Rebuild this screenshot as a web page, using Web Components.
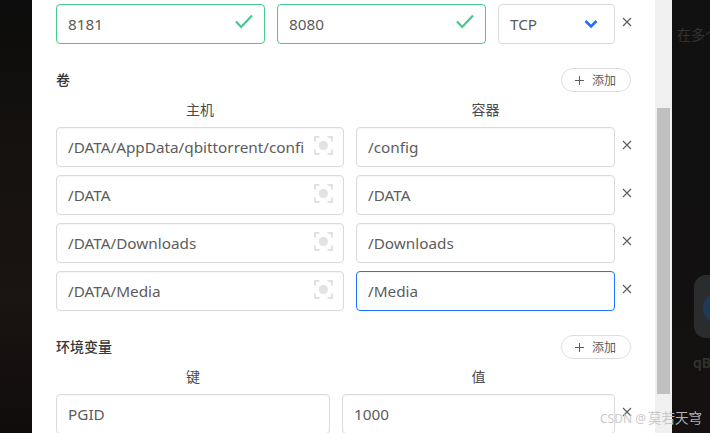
<!DOCTYPE html>
<html>
<head>
<meta charset="utf-8">
<style>
  html, body { margin: 0; height: 100%; overflow: hidden; background: #111; }
  body { font-family: "Noto Sans", "Noto Sans CJK SC", sans-serif; }
</style>
</head>
<body>
<app-shell>
  <port-row>
    <text-field value="8181" state="ok"></text-field>
    <text-field value="8080" state="ok"></text-field>
    <select-field value="TCP"></select-field>
  </port-row>

  <section-head title="卷"></section-head>
  <column-labels cols="288px 259px" left="主机" right="容器"></column-labels>
  <field-row cols="288px 259px">
    <text-field value="/DATA/AppData/qbittorrent/confi" picker></text-field>
    <text-field value="/config"></text-field>
  </field-row>
  <field-row cols="288px 259px">
    <text-field value="/DATA" picker></text-field>
    <text-field value="/DATA"></text-field>
  </field-row>
  <field-row cols="288px 259px">
    <text-field value="/DATA/Downloads" picker></text-field>
    <text-field value="/Downloads"></text-field>
  </field-row>
  <field-row cols="288px 259px">
    <text-field value="/DATA/Media" picker></text-field>
    <text-field value="/Media" state="focus"></text-field>
  </field-row>

  <section-head title="环境变量"></section-head>
  <column-labels cols="274px 273px" left="键" right="值"></column-labels>
  <field-row cols="274px 273px">
    <text-field value="PGID"></text-field>
    <text-field value="1000"></text-field>
  </field-row>
</app-shell>

<script>
// Dark desktop behind the dialog, dialog body and its scrollbar
class AppShell extends HTMLElement {
  constructor() {
    super();
    this.attachShadow({ mode: 'open' });
    this.shadowRoot.innerHTML = `
      <style>
        :host { display: block; position: relative; width: 710px; height: 433px; overflow: hidden;
          background: #111; }
        .left { background: linear-gradient(180deg, #0c0c0c 0, #14110f 130px, #1a1412 300px, #0f0c0c 433px); }
        .right { background: linear-gradient(180deg, #111 0, #121010 250px, #151110 433px); }
        .frame { display: grid; grid-template-columns: 32px 623px 17px 38px; height: 433px; }
        .panel { background: #fff; padding: 4px 24px 0; overflow: hidden; color: #4a4a4a; }
        .track { background: #f0f0f0; padding-top: 108px; }
        .thumb { height: 286px; margin: 0 2px; background: #c0c0c0; }
        .bg-text { position: absolute; color: #333; font-size: 14px; white-space: nowrap; }
        .bg-icon { position: absolute; left: 694px; top: 275px; width: 40px; height: 63px;
          border-radius: 12px; background: #2b2c2e; overflow: hidden; }
        .bg-icon i { position: absolute; left: 9px; top: 18px; width: 30px; height: 30px; border-radius: 50%; background: #1d3a58; }
        .mark { position: absolute; left: 600px; top: 408px; font-size: 13.500px; line-height: 20px;
          color: rgba(196,196,196,.92); white-space: nowrap; }
        .mark span { font-size: 12px; margin-right: 2px; }
      </style>
      <div class="frame">
        <div class="left"></div>
        <div class="panel"><slot></slot></div>
        <div class="track"><div class="thumb"></div></div>
        <div class="right"></div>
      </div>
      <div class="bg-text" style="left:677px;top:24px">在多个</div>
      <div class="bg-icon"><i></i></div>
      <div class="bg-text" style="left:693px;top:353px;font-weight:600">qB</div>
      <div class="mark"><span>CSDN @</span>莫若天穹</div>
    `;
  }
}

// Single input look-alike, with optional check mark or folder picker icon
class TextField extends HTMLElement {
  constructor() {
    super();
    this.attachShadow({ mode: 'open' });
  }
  connectedCallback() {
    const state = this.getAttribute('state') || '';
    const icon = state === 'ok'
      ? `<svg class="check" width="20" height="16" viewBox="0 0 20 16"><path d="M2 8.500 7.200 14 18 2.500" fill="none" stroke="#48c78e" stroke-width="2.200"/></svg>`
      : this.hasAttribute('picker')
        ? `<svg class="pick" width="19" height="19" viewBox="0 0 19 19"><path d="M1 5.500V1H5.500M13.500 1H18V5.500M18 13.500V18H13.500M5.500 18H1V13.500" fill="none" stroke="#e2e2e2" stroke-width="2"/><circle cx="9.500" cy="9.500" r="4.500" fill="#e2e2e2"/></svg>`
        : '';
    this.shadowRoot.innerHTML = `
      <style>
        :host { display: block; }
        .box { position: relative; display: flex; align-items: center; box-sizing: border-box; height: 40px;
          padding: 0 11px; background: #fff; border: 1px solid #dbdbdb; border-radius: 4px;
          box-shadow: inset 0 1px 2px rgba(10,10,10,.04); font-size: 15.300px; color: #5c5c5c; }
        .box.ok { border-color: #48c78e; }
        .box.focus { border-color: #1f74ff; }
        .val { flex: 1; min-width: 0; white-space: nowrap; }
        .check { position: absolute; right: 10px; top: 8px; }
        .pick { position: absolute; right: 10px; top: 8px; }
      </style>
      <div class="box ${state}">
        <span class="val">${this.getAttribute('value')}</span>${icon}
      </div>
    `;
  }
}

class SelectField extends HTMLElement {
  constructor() {
    super();
    this.attachShadow({ mode: 'open' });
  }
  connectedCallback() {
    this.shadowRoot.innerHTML = `
      <style>
        :host { display: block; }
        .box { display: flex; align-items: center; justify-content: space-between; box-sizing: border-box; height: 40px;
          padding: 0 16px 0 11px; border: 1px solid #dbdbdb; border-radius: 4px; font-size: 15.300px; color: #5c5c5c; }
      </style>
      <div class="box">
        <span>${this.getAttribute('value')}</span>
        <svg width="14" height="10" viewBox="0 0 14 10"><path d="M1.500 2 7 7.500 12.500 2" fill="none" stroke="#1f6fff" stroke-width="2.600"/></svg>
      </div>
    `;
  }
}

// Small x button at the end of a row
class CloseIcon extends HTMLElement {
  constructor() {
    super();
    this.attachShadow({ mode: 'open' });
    this.shadowRoot.innerHTML = `
      <style>:host { display: block; width: 10px; height: 10px; line-height: 0; }</style>
      <svg width="10" height="10" viewBox="0 0 10 10"><path d="M1 1 9 9M9 1 1 9" fill="none" stroke="#5a5a5a" stroke-width="1.100"/></svg>
    `;
  }
}

class PortRow extends HTMLElement {
  constructor() {
    super();
    this.attachShadow({ mode: 'open' });
    this.shadowRoot.innerHTML = `
      <style>
        :host { display: grid; grid-template-columns: 209px 209px 117px 10px; column-gap: 12px; align-items: start; }
        close-icon { margin: 13px 0 0 -5px; }
      </style>
      <slot></slot><close-icon></close-icon>
    `;
  }
}

class FieldRow extends HTMLElement {
  constructor() {
    super();
    this.attachShadow({ mode: 'open' });
  }
  connectedCallback() {
    this.shadowRoot.innerHTML = `
      <style>
        :host { display: grid; grid-template-columns: ${this.getAttribute('cols')} 10px; column-gap: 12px; align-items: start; margin-bottom: 8px; }
        close-icon { margin: 13px 0 0 -5px; }
      </style>
      <slot></slot><close-icon></close-icon>
    `;
  }
}

class ColumnLabels extends HTMLElement {
  constructor() {
    super();
    this.attachShadow({ mode: 'open' });
  }
  connectedCallback() {
    this.shadowRoot.innerHTML = `
      <style>
        :host { display: grid; grid-template-columns: ${this.getAttribute('cols')}; column-gap: 12px;
          height: 24px; margin-bottom: 5px; font-size: 14px; line-height: 24px; text-align: center; color: #4a4a4a; }
      </style>
      <div>${this.getAttribute('left')}</div><div>${this.getAttribute('right')}</div>
    `;
  }
}

class AddButton extends HTMLElement {
  constructor() {
    super();
    this.attachShadow({ mode: 'open' });
    this.shadowRoot.innerHTML = `
      <style>
        :host { display: flex; align-items: center; box-sizing: border-box; width: 70px; height: 24px;
          padding-left: 13px; border: 1px solid #dedede; border-radius: 12px; font-size: 12px; font-weight: 400; color: #5c5c5c; }
        svg { margin-right: 8px; }
      </style>
      <svg width="9" height="9" viewBox="0 0 9 9"><path d="M4.500 0V9M0 4.500H9" stroke="#5c5c5c" stroke-width="1"/></svg>
      <span>添加</span>
    `;
  }
}

class SectionHead extends HTMLElement {
  constructor() {
    super();
    this.attachShadow({ mode: 'open' });
  }
  connectedCallback() {
    this.shadowRoot.innerHTML = `
      <style>
        :host { display: flex; justify-content: space-between; align-items: center; height: 24px;
          margin-top: 24px; margin-bottom: 6px; font-size: 14px; font-weight: 500; color: #363636; }
        .title { padding-bottom: 2px; }
      </style>
      <span class="title">${this.getAttribute('title')}</span><add-button></add-button>
    `;
  }
}

customElements.define('app-shell', AppShell);
customElements.define('text-field', TextField);
customElements.define('select-field', SelectField);
customElements.define('close-icon', CloseIcon);
customElements.define('port-row', PortRow);
customElements.define('field-row', FieldRow);
customElements.define('column-labels', ColumnLabels);
customElements.define('add-button', AddButton);
customElements.define('section-head', SectionHead);
</script>
</body>
</html>
